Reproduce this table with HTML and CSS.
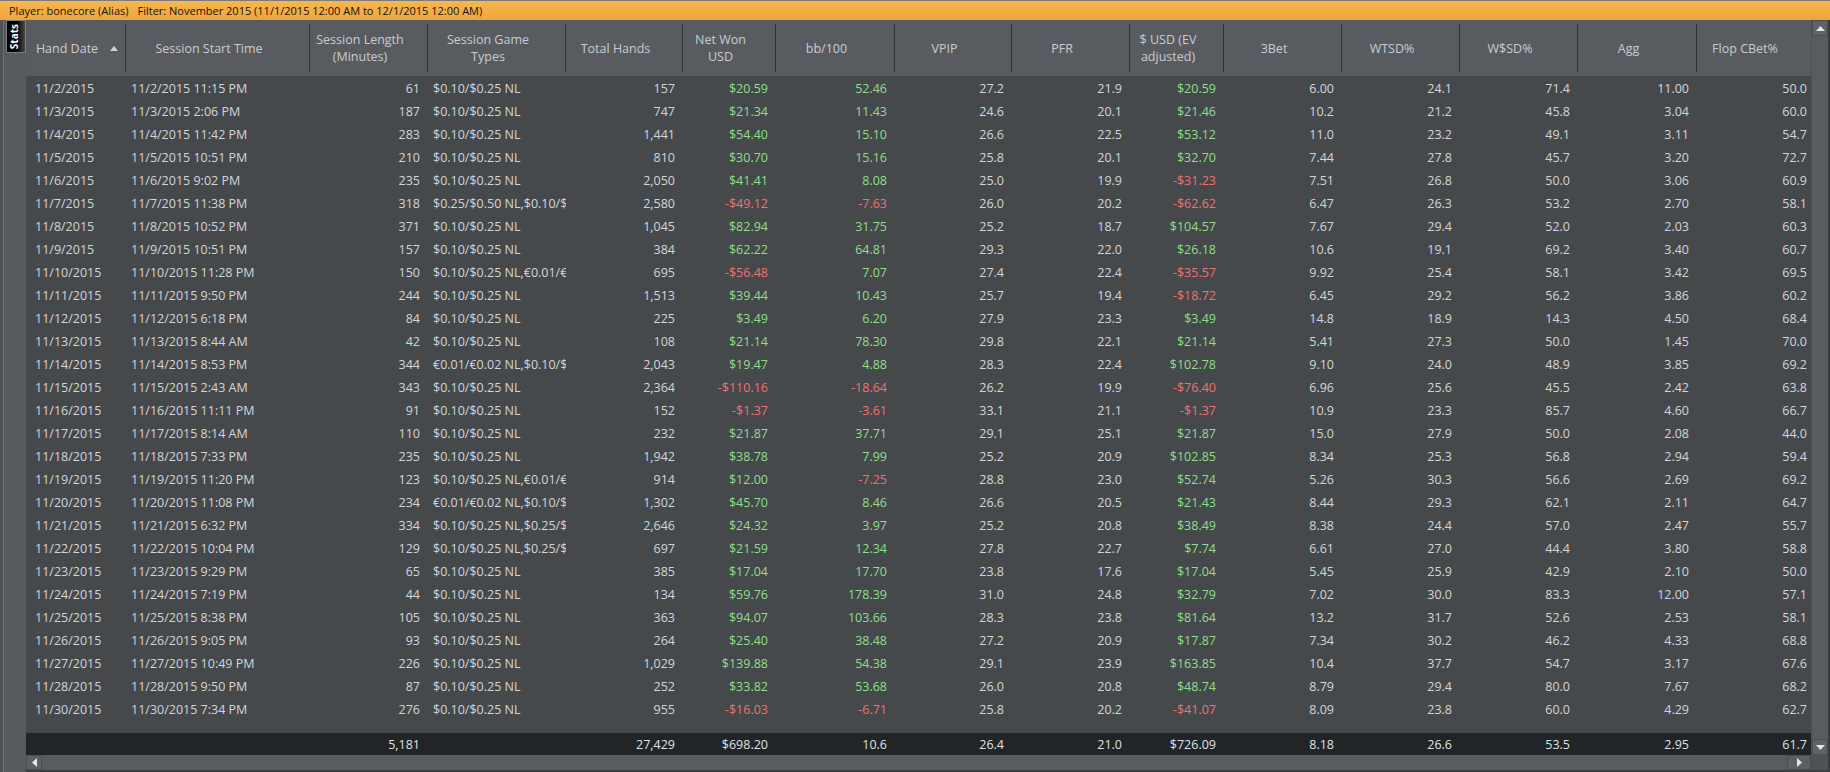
FILE: index.html
```html
<!DOCTYPE html>
<html>
<head>
<meta charset="utf-8">
<link rel="stylesheet" href="styles.css">
</head>
<body>
<div class="titlebar"><span>Player: bonecore (Alias)</span><span class="filter">Filter: November 2015 (11/1/2015 12:00 AM to 12/1/2015 12:00 AM)</span></div>
<div class="main">
  <div class="sidebar"><div class="stats-tab"><span>Stats</span></div></div>
  <div class="content">
    <div class="table">
      <div class="cols head">
        <div class="hcell"><span class="lbl">Hand Date</span><span class="sort"><svg width="8" height="5" viewBox="0 0 8 5"><polygon points="0,5 4,0 8,5" fill="#cfd2d5"/></svg></span></div>
        <div class="hcell"><span class="lbl">Session Start Time</span><span class="sort"></span></div>
        <div class="hcell"><span class="lbl">Session Length<br>(Minutes)</span><span class="sort"></span></div>
        <div class="hcell"><span class="lbl">Session Game<br>Types</span><span class="sort"></span></div>
        <div class="hcell"><span class="lbl">Total Hands</span><span class="sort"></span></div>
        <div class="hcell"><span class="lbl">Net Won<br>USD</span><span class="sort"></span></div>
        <div class="hcell"><span class="lbl">bb/100</span><span class="sort"></span></div>
        <div class="hcell"><span class="lbl">VPIP</span><span class="sort"></span></div>
        <div class="hcell"><span class="lbl">PFR</span><span class="sort"></span></div>
        <div class="hcell"><span class="lbl">$ USD (EV<br>adjusted)</span><span class="sort"></span></div>
        <div class="hcell"><span class="lbl">3Bet</span><span class="sort"></span></div>
        <div class="hcell"><span class="lbl">WTSD%</span><span class="sort"></span></div>
        <div class="hcell"><span class="lbl">W$SD%</span><span class="sort"></span></div>
        <div class="hcell"><span class="lbl">Agg</span><span class="sort"></span></div>
        <div class="hcell"><span class="lbl">Flop CBet%</span><span class="sort"></span></div>
      </div>
      <div class="rows">
        <div class="cols row"><span class="l1">11/2/2015</span><span class="l">11/2/2015 11:15 PM</span><span>61</span><span class="l">$0.10/$0.25 NL</span><span>157</span><span class="g">$20.59</span><span class="g">52.46</span><span>27.2</span><span>21.9</span><span class="g">$20.59</span><span>6.00</span><span>24.1</span><span>71.4</span><span>11.00</span><span class="last">50.0</span></div>
        <div class="cols row"><span class="l1">11/3/2015</span><span class="l">11/3/2015 2:06 PM</span><span>187</span><span class="l">$0.10/$0.25 NL</span><span>747</span><span class="g">$21.34</span><span class="g">11.43</span><span>24.6</span><span>20.1</span><span class="g">$21.46</span><span>10.2</span><span>21.2</span><span>45.8</span><span>3.04</span><span class="last">60.0</span></div>
        <div class="cols row"><span class="l1">11/4/2015</span><span class="l">11/4/2015 11:42 PM</span><span>283</span><span class="l">$0.10/$0.25 NL</span><span>1,441</span><span class="g">$54.40</span><span class="g">15.10</span><span>26.6</span><span>22.5</span><span class="g">$53.12</span><span>11.0</span><span>23.2</span><span>49.1</span><span>3.11</span><span class="last">54.7</span></div>
        <div class="cols row"><span class="l1">11/5/2015</span><span class="l">11/5/2015 10:51 PM</span><span>210</span><span class="l">$0.10/$0.25 NL</span><span>810</span><span class="g">$30.70</span><span class="g">15.16</span><span>25.8</span><span>20.1</span><span class="g">$32.70</span><span>7.44</span><span>27.8</span><span>45.7</span><span>3.20</span><span class="last">72.7</span></div>
        <div class="cols row"><span class="l1">11/6/2015</span><span class="l">11/6/2015 9:02 PM</span><span>235</span><span class="l">$0.10/$0.25 NL</span><span>2,050</span><span class="g">$41.41</span><span class="g">8.08</span><span>25.0</span><span>19.9</span><span class="r">-$31.23</span><span>7.51</span><span>26.8</span><span>50.0</span><span>3.06</span><span class="last">60.9</span></div>
        <div class="cols row"><span class="l1">11/7/2015</span><span class="l">11/7/2015 11:38 PM</span><span>318</span><span class="l">$0.25/$0.50 NL,$0.10/$0.25 NL</span><span>2,580</span><span class="r">-$49.12</span><span class="r">-7.63</span><span>26.0</span><span>20.2</span><span class="r">-$62.62</span><span>6.47</span><span>26.3</span><span>53.2</span><span>2.70</span><span class="last">58.1</span></div>
        <div class="cols row"><span class="l1">11/8/2015</span><span class="l">11/8/2015 10:52 PM</span><span>371</span><span class="l">$0.10/$0.25 NL</span><span>1,045</span><span class="g">$82.94</span><span class="g">31.75</span><span>25.2</span><span>18.7</span><span class="g">$104.57</span><span>7.67</span><span>29.4</span><span>52.0</span><span>2.03</span><span class="last">60.3</span></div>
        <div class="cols row"><span class="l1">11/9/2015</span><span class="l">11/9/2015 10:51 PM</span><span>157</span><span class="l">$0.10/$0.25 NL</span><span>384</span><span class="g">$62.22</span><span class="g">64.81</span><span>29.3</span><span>22.0</span><span class="g">$26.18</span><span>10.6</span><span>19.1</span><span>69.2</span><span>3.40</span><span class="last">60.7</span></div>
        <div class="cols row"><span class="l1">11/10/2015</span><span class="l">11/10/2015 11:28 PM</span><span>150</span><span class="l">$0.10/$0.25 NL,€0.01/€0.02 NL</span><span>695</span><span class="r">-$56.48</span><span class="g">7.07</span><span>27.4</span><span>22.4</span><span class="r">-$35.57</span><span>9.92</span><span>25.4</span><span>58.1</span><span>3.42</span><span class="last">69.5</span></div>
        <div class="cols row"><span class="l1">11/11/2015</span><span class="l">11/11/2015 9:50 PM</span><span>244</span><span class="l">$0.10/$0.25 NL</span><span>1,513</span><span class="g">$39.44</span><span class="g">10.43</span><span>25.7</span><span>19.4</span><span class="r">-$18.72</span><span>6.45</span><span>29.2</span><span>56.2</span><span>3.86</span><span class="last">60.2</span></div>
        <div class="cols row"><span class="l1">11/12/2015</span><span class="l">11/12/2015 6:18 PM</span><span>84</span><span class="l">$0.10/$0.25 NL</span><span>225</span><span class="g">$3.49</span><span class="g">6.20</span><span>27.9</span><span>23.3</span><span class="g">$3.49</span><span>14.8</span><span>18.9</span><span>14.3</span><span>4.50</span><span class="last">68.4</span></div>
        <div class="cols row"><span class="l1">11/13/2015</span><span class="l">11/13/2015 8:44 AM</span><span>42</span><span class="l">$0.10/$0.25 NL</span><span>108</span><span class="g">$21.14</span><span class="g">78.30</span><span>29.8</span><span>22.1</span><span class="g">$21.14</span><span>5.41</span><span>27.3</span><span>50.0</span><span>1.45</span><span class="last">70.0</span></div>
        <div class="cols row"><span class="l1">11/14/2015</span><span class="l">11/14/2015 8:53 PM</span><span>344</span><span class="l">€0.01/€0.02 NL,$0.10/$0.25 NL</span><span>2,043</span><span class="g">$19.47</span><span class="g">4.88</span><span>28.3</span><span>22.4</span><span class="g">$102.78</span><span>9.10</span><span>24.0</span><span>48.9</span><span>3.85</span><span class="last">69.2</span></div>
        <div class="cols row"><span class="l1">11/15/2015</span><span class="l">11/15/2015 2:43 AM</span><span>343</span><span class="l">$0.10/$0.25 NL</span><span>2,364</span><span class="r">-$110.16</span><span class="r">-18.64</span><span>26.2</span><span>19.9</span><span class="r">-$76.40</span><span>6.96</span><span>25.6</span><span>45.5</span><span>2.42</span><span class="last">63.8</span></div>
        <div class="cols row"><span class="l1">11/16/2015</span><span class="l">11/16/2015 11:11 PM</span><span>91</span><span class="l">$0.10/$0.25 NL</span><span>152</span><span class="r">-$1.37</span><span class="r">-3.61</span><span>33.1</span><span>21.1</span><span class="r">-$1.37</span><span>10.9</span><span>23.3</span><span>85.7</span><span>4.60</span><span class="last">66.7</span></div>
        <div class="cols row"><span class="l1">11/17/2015</span><span class="l">11/17/2015 8:14 AM</span><span>110</span><span class="l">$0.10/$0.25 NL</span><span>232</span><span class="g">$21.87</span><span class="g">37.71</span><span>29.1</span><span>25.1</span><span class="g">$21.87</span><span>15.0</span><span>27.9</span><span>50.0</span><span>2.08</span><span class="last">44.0</span></div>
        <div class="cols row"><span class="l1">11/18/2015</span><span class="l">11/18/2015 7:33 PM</span><span>235</span><span class="l">$0.10/$0.25 NL</span><span>1,942</span><span class="g">$38.78</span><span class="g">7.99</span><span>25.2</span><span>20.9</span><span class="g">$102.85</span><span>8.34</span><span>25.3</span><span>56.8</span><span>2.94</span><span class="last">59.4</span></div>
        <div class="cols row"><span class="l1">11/19/2015</span><span class="l">11/19/2015 11:20 PM</span><span>123</span><span class="l">$0.10/$0.25 NL,€0.01/€0.02 NL</span><span>914</span><span class="g">$12.00</span><span class="r">-7.25</span><span>28.8</span><span>23.0</span><span class="g">$52.74</span><span>5.26</span><span>30.3</span><span>56.6</span><span>2.69</span><span class="last">69.2</span></div>
        <div class="cols row"><span class="l1">11/20/2015</span><span class="l">11/20/2015 11:08 PM</span><span>234</span><span class="l">€0.01/€0.02 NL,$0.10/$0.25 NL</span><span>1,302</span><span class="g">$45.70</span><span class="g">8.46</span><span>26.6</span><span>20.5</span><span class="g">$21.43</span><span>8.44</span><span>29.3</span><span>62.1</span><span>2.11</span><span class="last">64.7</span></div>
        <div class="cols row"><span class="l1">11/21/2015</span><span class="l">11/21/2015 6:32 PM</span><span>334</span><span class="l">$0.10/$0.25 NL,$0.25/$0.50 NL</span><span>2,646</span><span class="g">$24.32</span><span class="g">3.97</span><span>25.2</span><span>20.8</span><span class="g">$38.49</span><span>8.38</span><span>24.4</span><span>57.0</span><span>2.47</span><span class="last">55.7</span></div>
        <div class="cols row"><span class="l1">11/22/2015</span><span class="l">11/22/2015 10:04 PM</span><span>129</span><span class="l">$0.10/$0.25 NL,$0.25/$0.50 NL</span><span>697</span><span class="g">$21.59</span><span class="g">12.34</span><span>27.8</span><span>22.7</span><span class="g">$7.74</span><span>6.61</span><span>27.0</span><span>44.4</span><span>3.80</span><span class="last">58.8</span></div>
        <div class="cols row"><span class="l1">11/23/2015</span><span class="l">11/23/2015 9:29 PM</span><span>65</span><span class="l">$0.10/$0.25 NL</span><span>385</span><span class="g">$17.04</span><span class="g">17.70</span><span>23.8</span><span>17.6</span><span class="g">$17.04</span><span>5.45</span><span>25.9</span><span>42.9</span><span>2.10</span><span class="last">50.0</span></div>
        <div class="cols row"><span class="l1">11/24/2015</span><span class="l">11/24/2015 7:19 PM</span><span>44</span><span class="l">$0.10/$0.25 NL</span><span>134</span><span class="g">$59.76</span><span class="g">178.39</span><span>31.0</span><span>24.8</span><span class="g">$32.79</span><span>7.02</span><span>30.0</span><span>83.3</span><span>12.00</span><span class="last">57.1</span></div>
        <div class="cols row"><span class="l1">11/25/2015</span><span class="l">11/25/2015 8:38 PM</span><span>105</span><span class="l">$0.10/$0.25 NL</span><span>363</span><span class="g">$94.07</span><span class="g">103.66</span><span>28.3</span><span>23.8</span><span class="g">$81.64</span><span>13.2</span><span>31.7</span><span>52.6</span><span>2.53</span><span class="last">58.1</span></div>
        <div class="cols row"><span class="l1">11/26/2015</span><span class="l">11/26/2015 9:05 PM</span><span>93</span><span class="l">$0.10/$0.25 NL</span><span>264</span><span class="g">$25.40</span><span class="g">38.48</span><span>27.2</span><span>20.9</span><span class="g">$17.87</span><span>7.34</span><span>30.2</span><span>46.2</span><span>4.33</span><span class="last">68.8</span></div>
        <div class="cols row"><span class="l1">11/27/2015</span><span class="l">11/27/2015 10:49 PM</span><span>226</span><span class="l">$0.10/$0.25 NL</span><span>1,029</span><span class="g">$139.88</span><span class="g">54.38</span><span>29.1</span><span>23.9</span><span class="g">$163.85</span><span>10.4</span><span>37.7</span><span>54.7</span><span>3.17</span><span class="last">67.6</span></div>
        <div class="cols row"><span class="l1">11/28/2015</span><span class="l">11/28/2015 9:50 PM</span><span>87</span><span class="l">$0.10/$0.25 NL</span><span>252</span><span class="g">$33.82</span><span class="g">53.68</span><span>26.0</span><span>20.8</span><span class="g">$48.74</span><span>8.79</span><span>29.4</span><span>80.0</span><span>7.67</span><span class="last">68.2</span></div>
        <div class="cols row"><span class="l1">11/30/2015</span><span class="l">11/30/2015 7:34 PM</span><span>276</span><span class="l">$0.10/$0.25 NL</span><span>955</span><span class="r">-$16.03</span><span class="r">-6.71</span><span>25.8</span><span>20.2</span><span class="r">-$41.07</span><span>8.09</span><span>23.8</span><span>60.0</span><span>4.29</span><span class="last">62.7</span></div>
      </div>
      <div class="cols foot"><span></span><span></span><span>5,181</span><span></span><span>27,429</span><span>$698.20</span><span>10.6</span><span>26.4</span><span>21.0</span><span>$726.09</span><span>8.18</span><span>26.6</span><span>53.5</span><span>2.95</span><span class="last">61.7</span></div>
    </div>
    <div class="vscroll">
      <div class="sbtn up"><svg width="9" height="5" viewBox="0 0 9 5"><polygon points="0,5 4.5,0 9,5" fill="#e4e6e8"/></svg></div>
      <div class="track"></div>
      <div class="sbtn down"><svg width="9" height="5" viewBox="0 0 9 5"><polygon points="0,0 4.5,5 9,0" fill="#e4e6e8"/></svg></div>
    </div>
    <div class="hscroll">
      <div class="hbtn left"><svg width="5" height="9" viewBox="0 0 5 9"><polygon points="5,0 0,4.5 5,9" fill="#e4e6e8"/></svg></div>
      <div class="htrack"></div>
      <div class="hbtn right"><svg width="5" height="9" viewBox="0 0 5 9"><polygon points="0,0 5,4.5 0,9" fill="#e4e6e8"/></svg></div>
    </div>
    <div class="corner"></div>
  </div>
</div>
</body>
</html>
```
FILE: styles.css
```css
* { box-sizing: border-box; }
html, body { margin: 0; padding: 0; }
body {
  width: 1830px;
  height: 772px;
  overflow: hidden;
  background: #46494c;
  font-family: "Open Sans", "Noto Sans", sans-serif;
  font-size: 12.5px;
  color: #d2d6da;
}
.titlebar {
  height: 20px;
  border-top: 1px solid #7b7b7b;
  background: linear-gradient(#f7b64f, #efa63b);
  color: #141414;
  font-size: 11px;
  line-height: 19px;
  padding-left: 9px;
  white-space: nowrap;
}
.titlebar .filter { margin-left: 9px; }
.main { display: flex; height: 752px; }
.sidebar {
  width: 26px;
  flex: none;
  background: #56595d;
  border-left: 3px solid #4e5155;
  box-shadow: inset 1px 0 #6c6f73;
  padding-left: 3px;
}
.stats-tab {
  width: 20px;
  height: 33px;
  background: linear-gradient(90deg, #000 0, #000 55%, #4a4a4a 100%);
  border: 1px solid #7d7d7d;
  display: flex;
  align-items: center;
  justify-content: flex-start;
  padding-left: 2px;
}
.stats-tab span {
  writing-mode: vertical-rl;
  transform: rotate(180deg);
  color: #fff;
  font-size: 10px;
  font-weight: 700;
  line-height: 11px;
}
.content {
  flex: 1;
  display: grid;
  grid-template-columns: 1785px 19px;
  grid-template-rows: 735px 17px;
}
.table { display: flex; flex-direction: column; min-height: 0; }
.cols {
  display: grid;
  grid-template-columns: 100px 184px 118px 138px 117px 93px 119px 117px 118px 94px 118px 118px 118px 119px 114px;
}
.head { height: 56px; background: #585c60; color: #c8ccd0; flex: none; }
.hcell {
  position: relative;
  display: flex;
  align-items: center;
  text-align: center;
  line-height: 17px;
}
.hcell .lbl { flex: 1; }
.hcell .sort {
  width: 18px;
  flex: none;
  display: flex;
  align-items: center;
  justify-content: flex-start;
  padding-left: 2px;
}
.hcell::after {
  content: "";
  position: absolute;
  right: 0;
  top: 4px;
  bottom: 4px;
  width: 1px;
  background: #303336;
}
.hcell:last-child::after { display: none; }
.rows { flex: 1; padding-top: 1px; background: #46494c; }
.row { height: 23px; align-items: center; }
.row > span, .foot > span {
  white-space: nowrap;
  overflow: hidden;
  text-overflow: clip;
  padding-right: 8px;
  text-align: right;
}
.row > span.l { text-align: left; padding: 0 0 0 5px; }
.row > span.l1 { text-align: left; padding: 0 0 0 9px; }
.row > span.last, .foot > span.last { padding-right: 4px; }
.g { color: #8fdf89; }
.r { color: #ee7272; }
.foot {
  height: 22px;
  flex: none;
  background: #222527;
  color: #dfe2e5;
  align-items: center;
}
.vscroll {
  display: flex;
  flex-direction: column;
  background: #585b5f;
  border-left: 1px solid #4c4f53;
  border-right: 2px solid #393c3f;
}
.sbtn {
  height: 16px;
  display: flex;
  align-items: center;
  justify-content: center;
  background: #5f6266;
  border: 1px solid #4a4d51;
}
.track { flex: 1; }
.hscroll {
  display: flex;
  background: #585b5f;
  border-bottom: 2px solid #3c3f42;
}
.hbtn {
  width: 16px;
  display: flex;
  align-items: center;
  justify-content: center;
  background: #5c5f63;
  border: 1px solid #4a4d51;
}
.hbtn.right { width: 24px; }
.htrack { flex: 1; }
.corner { background: #4e5155; border-bottom: 2px solid #3c3f42; border-right: 2px solid #393c3f; }
```
